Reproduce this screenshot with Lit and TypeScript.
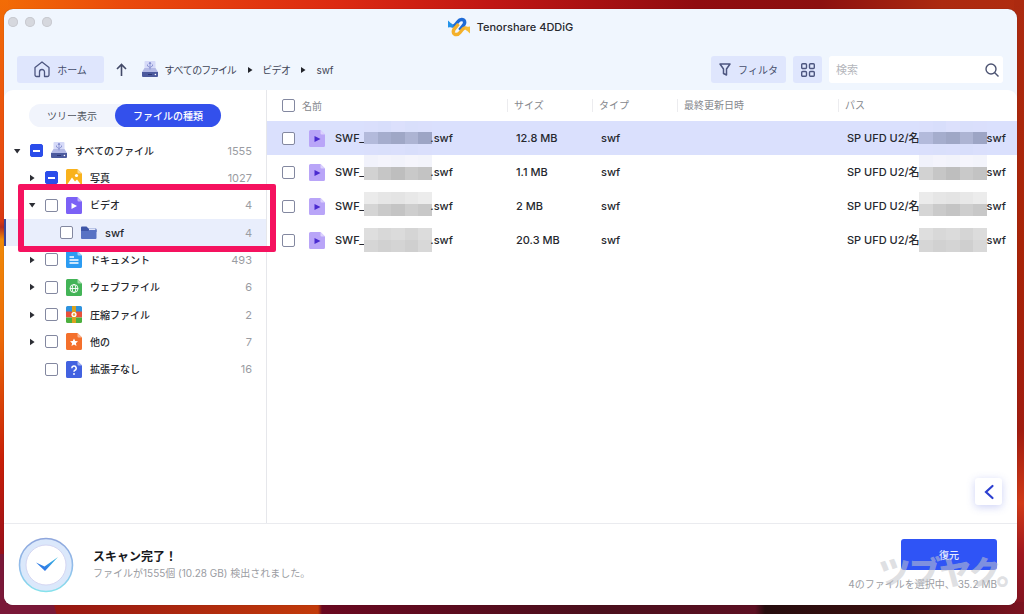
import { LitElement, html, svg, css } from "lit";
import { customElement, state } from "lit/decorators.js";
import { classMap } from "lit/directives/class-map.js";

type Kind = "drive" | "photo" | "video" | "folder" | "doc" | "web" | "zip" | "other" | "unknown";

interface Node {
  label: string;
  count: number;
  kind: Kind;
  level: number;
  arrow: "open" | "closed" | "none";
  partial?: boolean;
  selected?: boolean;
}

interface Band {
  y: number;
  h: number;
  shades: string[];
}

interface FileRow {
  size: string;
  selected?: boolean;
  mask: Band[];
}

const NODES: Node[] = [
  { label: "すべてのファイル", count: 1555, kind: "drive", level: 0, arrow: "open", partial: true },
  { label: "写真", count: 1027, kind: "photo", level: 1, arrow: "closed", partial: true },
  { label: "ビデオ", count: 4, kind: "video", level: 1, arrow: "open" },
  { label: "swf", count: 4, kind: "folder", level: 2, arrow: "none", selected: true },
  { label: "ドキュメント", count: 493, kind: "doc", level: 1, arrow: "closed" },
  { label: "ウェブファイル", count: 6, kind: "web", level: 1, arrow: "closed" },
  { label: "圧縮ファイル", count: 2, kind: "zip", level: 1, arrow: "closed" },
  { label: "他の", count: 7, kind: "other", level: 1, arrow: "closed" },
  { label: "拡張子なし", count: 16, kind: "unknown", level: 1, arrow: "none" },
];

const FILES: FileRow[] = [
  {
    size: "12.8 MB",
    selected: true,
    mask: [
      { y: 0, h: 11, shades: ["#dadffc", "#d8defb", "#dce0fc", "#d9dffb", "#dadffc"] },
      { y: 11, h: 12, shades: ["#b3badb", "#a5adcd", "#9fa7c6", "#adb4d3", "#9da5c5"] },
      { y: 23, h: 11, shades: ["#dadffc", "#d9dffb", "#dadffc", "#d8defb", "#dadffc"] },
    ],
  },
  {
    size: "1.1 MB",
    mask: [
      { y: 0, h: 12, shades: ["#f1f2fb", "#f4f4fc", "#f2f3fb", "#f5f5fc", "#f3f4fb"] },
      { y: 12, h: 13, shades: ["#d2d2d2", "#c6c6c6", "#bebebe", "#c9c9c9", "#c3c3c3"] },
    ],
  },
  {
    size: "2 MB",
    mask: [
      { y: 3, h: 12, shades: ["#ebebeb", "#e6e6e6", "#e4e4e4", "#e8e8e8", "#ececec"] },
      { y: 15, h: 12, shades: ["#d5d5d5", "#cacaca", "#c4c4c4", "#cecece", "#c8c8c8"] },
    ],
  },
  {
    size: "20.3 MB",
    mask: [
      { y: 5, h: 12, shades: ["#dedede", "#d8d8d8", "#dbdbdb", "#d5d5d5", "#dcdcdc"] },
      { y: 17, h: 12, shades: ["#d6d6d6", "#d1d1d1", "#d4d4d4", "#cfcfcf", "#d8d8d8"] },
    ],
  },
];

const sheet = (color: string, fold: string, mark: unknown) => svg`
  <path d="M1.5 0H11.5L16 4.5V15.5A1.5 1.5 0 0 1 14.5 17H1.5A1.5 1.5 0 0 1 0 15.5V1.5A1.5 1.5 0 0 1 1.5 0Z" fill=${color}/>
  <path d="M11.5 0L16 4.5H12.5A1 1 0 0 1 11.5 3.5Z" fill=${fold}/>${mark}`;

const GLYPHS: Record<Kind, unknown> = {
  drive: svg`
    <path d="M3.500 0H12.500A1 1 0 0 1 13.500 1V10H2.500V1A1 1 0 0 1 3.500 0Z" fill="#d6daf8"/>
    <path d="M2.500 7L0 11H16L13.500 7Z" fill="#b4bae6"/>
    <path d="M8 8.500V2M8 1L7 2.500H9ZM5.500 3.500V5L8 6.500L10.500 5V3.500" fill="none" stroke="#7d88cc" stroke-width=".8"/>
    <path d="M0 11H16V15A1 1 0 0 1 15 16H1A1 1 0 0 1 0 15Z" fill="#4c5a9e"/>
    <path d="M6 13.5H10" stroke="#2d3873" stroke-width="1"/><circle cx="13.4" cy="13.5" r=".8" fill="#fff"/>`,
  photo: sheet("#f9b21c", "#fcd88a", svg`<path d="M1.5 15L6 8.5L9 12.5L11 10.5L14.5 15Z" fill="#fff"/><circle cx="10.5" cy="6.5" r="1.6" fill="#fff"/>`),
  video: sheet("#7b61f6", "#bfb0fb", svg`<path d="M5.5 6L11 9L5.5 12Z" fill="#fff"/>`),
  folder: svg`<path d="M0 3.5A1 1 0 0 1 1 2.5H5.5L7.5 4.5H14.5A1 1 0 0 1 15.5 5.5V8H0Z" fill="#3f56a8"/><path d="M8 4.5H14.5V7H8Z" fill="#dfe5fa"/><path d="M0 7H7L8.5 6H15.5V14A1 1 0 0 1 14.5 15H1A1 1 0 0 1 0 14Z" fill="#5872c4"/>`,
  doc: sheet("#2c9cf2", "#9dd2fb", svg`<path d="M3.5 6H8M3.5 9H12.5M3.5 12H12.5" stroke="#fff" stroke-width="1.4"/>`),
  web: sheet("#43b457", "#a3dcab", svg`<g fill="none" stroke="#fff" stroke-width=".9"><circle cx="8" cy="9.5" r="4"/><ellipse cx="8" cy="9.5" rx="1.8" ry="4"/><path d="M4 9.5H12"/></g>`),
  zip: svg`<path d="M1.5 0H14.5A1.5 1.5 0 0 1 16 1.5V6H0V1.5A1.5 1.5 0 0 1 1.5 0Z" fill="#2f93dd"/><path d="M0 5.5H16V11.5H0Z" fill="#e8503a"/><path d="M0 11.5H16V15.5A1.5 1.5 0 0 1 14.5 17H1.5A1.5 1.5 0 0 1 0 15.5Z" fill="#4caf3e"/><path d="M6 0H10V17H6Z" fill="#d9a21f"/><circle cx="8" cy="8.5" r="2.6" fill="#fff"/><circle cx="8" cy="8.5" r="1.2" fill="#e8a03a"/>`,
  other: sheet("#f4702c", "#fab795", svg`<path d="M8 5.4L9.2 8L12 8.3L9.9 10.2L10.5 13L8 11.6L5.5 13L6.1 10.2L4 8.3L6.8 8Z" fill="#fff"/>`),
  unknown: sheet("#4262e0", "#a5b5f3", svg`<path d="M5.8 7.2A2.2 2.2 0 1 1 8.8 9.3Q8 9.7 8 10.8" fill="none" stroke="#fff" stroke-width="1.5"/><circle cx="8" cy="13" r=".95" fill="#fff"/>`),
};

const icon = (kind: Kind) => html`<svg class="icon" viewBox="0 0 16 17" aria-hidden="true">${GLYPHS[kind]}</svg>`;

const mosaic = (bands: Band[]) => html`<svg class="mosaic" viewBox="0 0 68 34" preserveAspectRatio="none" shape-rendering="crispEdges" aria-hidden="true">
  ${bands.map((b) => b.shades.map((c, i) => svg`<rect x=${i * 13.6} y=${b.y} width="13.8" height=${b.h} fill=${c}/>`))}
</svg>`;

@customElement("app-root")
export class AppRoot extends LitElement {
  @state() private view: "tree" | "kind" = "kind";

  static styles = css`
    :host {
      display: flex;
      box-sizing: border-box;
      min-height: 100vh;
      padding: 9px 7px 9px 4px;
      font: 11px/16px Inter, "Noto Sans CJK JP", sans-serif;
      color: #26282e;
      background:
        linear-gradient(75deg, #7a1838 0 54px, transparent 55px) 0 100% / 70px 60px no-repeat,
        linear-gradient(90deg, #8d0f14 0, #c23a0a 318px, #6a0820 322px, #4a0f1c 600px, #5c0f22 755px, #260c0e 765px, #3c100f 900px, #7c1220 100%) 0 100% / 100% 12px no-repeat,
        linear-gradient(180deg, #ac2a10 0, #a82408 40%, #a01c10 70%, #d03a18 82%, #a01820 90%, #7c1220 100%) 100% 0 / 10px 100% no-repeat,
        linear-gradient(180deg, #f26c06 0, #e84c10 25%, #d83812 36%, #b42c20 37%, #f08a08 39%, #ec6a08 55%, #c81e08 75%, #98101a 90%, #7a1838 100%) 0 0 / 8px 100% no-repeat,
        linear-gradient(90deg, #f26c06 0, #ea4a0c 12%, #dc2a12 33%, #c01614 48%, #900c10 68%, #8c1010 80%, #ac2a10 92%, #b02c10 100%);
    }
    button, input { font: inherit; color: inherit; margin: 0; }
    button { border: 0; padding: 0; cursor: pointer; }
    svg { display: block; flex: none; }
    .window {
      position: relative;
      flex: 1;
      min-width: 0;
      display: flex;
      flex-direction: column;
      border-radius: 9px;
      overflow: hidden;
      background: #f0f6fe;
      box-shadow: 0 0 1px #0006;
    }
    .titlebar { display: grid; grid-template-columns: 1fr auto 1fr; align-items: center; height: 35px; }
    .lights { display: flex; gap: 7px; padding: 0 0 10px 4px; }
    .light { width: 10px; height: 10px; border-radius: 50%; background: #d6d8de; box-shadow: inset 0 0 0 1px #c8cad0; }
    .brand { display: flex; align-items: center; gap: 7px; margin: 0; font-size: 11px; font-weight: 500; color: #26282e; }
    .logo { width: 22px; height: 20px; }
    .toolbar { display: flex; align-items: center; gap: 7px; padding: 12px 14px 7px 13px; }
    .tool {
      display: flex;
      align-items: center;
      justify-content: center;
      gap: 7px;
      height: 27px;
      border-radius: 3px;
      background: #dfe6fd;
      color: #464e6c;
      font-size: 10px;
    }
    .home { width: 87px; }
    .filter { width: 75px; }
    .grid { width: 29px; }
    .up { background: none; display: flex; padding: 0 5px; }
    .crumbs { display: flex; align-items: center; gap: 10px; flex: 1; padding-left: 3px; color: #3f4557; font-size: 10px; font-feature-settings: "palt"; }
    .crumbs a { display: flex; align-items: center; gap: 7px; color: inherit; text-decoration: none; }
    .icon { width: 16px; height: 17px; }
    .search { display: flex; align-items: center; width: 174px; height: 27px; box-sizing: border-box; padding: 0 4px 0 7px; border-radius: 3px; background: #fff; }
    .search input { flex: 1; min-width: 0; border: 0; padding: 0; outline: 0; background: none; font-size: 11px; }
    .search input::placeholder { color: #b4b6bc; opacity: 1; }
    .search button { background: none; }
    .main { flex: 1; display: flex; min-height: 0; background: #fff; border-radius: 9px 9px 0 0; }
    .side { width: 262px; flex: none; border-right: 1px solid #e6e7eb; }
    .tabs { display: flex; width: 192px; margin: 14px 0 10px 25px; border-radius: 12px; background: #f1f4fc; }
    .tab { height: 23px; flex: 1; border-radius: 12px; background: none; font-size: 10px; color: #50545f; }
    .tab.on { flex: none; width: 106px; background: #3350ec; color: #fff; font-weight: 500; }
    .tree { display: grid; grid-auto-rows: 1fr; height: 246px; margin: 0; padding: 0; list-style: none; }
    .node { display: flex; align-items: center; padding: 0 14px 0 9px; font-size: 10px; font-weight: 500; }
    .node.l1 { padding-left: 24px; }
    .node.l2 { padding-left: 39px; font-size: 11px; }
    .node.sel { background: #e9eefc; box-shadow: inset 2px 0 #3a479c; }
    .node label { display: flex; align-items: center; gap: 8px; flex: 1; }
    .twist { width: 9px; height: 8px; margin-right: 8px; background: none; }
    .count { color: #9a9ca2; font-size: 11px; font-weight: 400; }
    .box {
      appearance: none;
      box-sizing: border-box;
      flex: none;
      width: 13px;
      height: 13px;
      border: 1px solid #8388a0;
      border-radius: 2px;
      background: #fff;
    }
    .box:indeterminate { border-color: #2b4dea; background: linear-gradient(#fff, #fff) center / 7px 2px no-repeat #2b4dea; }
    .files { flex: 1; min-width: 0; position: relative; }
    table { width: 100%; table-layout: fixed; border-collapse: collapse; }
    th, td { padding: 0; text-align: left; white-space: nowrap; font-weight: 400; overflow: hidden; }
    th { height: 31px; color: #85878d; font-size: 10px; }
    th span { display: block; padding-left: 6px; line-height: 13px; border-left: 1px solid #ececef; }
    td { height: 34px; padding-left: 9px; font-weight: 500; color: #26282e; }
    tr.sel td { background: #dae0fd; }
    .c-pick { width: 42px; }
    .c-name { width: 198px; }
    .c-mid { width: 85px; }
    .c-path { width: 179px; }
    .pick { padding-left: 15px; }
    td .box { display: block; }
    td.name { padding-left: 0; }
    .cell { display: flex; align-items: center; }
    .all { gap: 7px; padding-left: 15px; }
    .name .icon { margin-right: 10px; }
    .mosaic { width: 68px; height: 34px; }
    .name .mosaic { margin-right: -2px; }
    .path .mosaic { margin-left: -1px; }
    .fold {
      position: absolute;
      right: 15px;
      bottom: 18px;
      width: 27px;
      height: 27px;
      display: grid;
      place-items: center;
      border-radius: 3px;
      background: #fff;
      box-shadow: 0 2px 8px #5a6be04d;
    }
    .foot { display: flex; align-items: center; gap: 19px; padding: 13px 20px 12px 14px; border-top: 1px solid #eaebef; background: #fff; }
    .badge { width: 56px; height: 56px; }
    .done { flex: 1; padding-bottom: 2px; }
    .done h2 { margin: 0; font-size: 12px; line-height: 18px; font-weight: 600; color: #18191d; }
    .done p, .sum { margin: 0; font-size: 10px; line-height: 14px; color: #9a9ca2; }
    .go { display: flex; flex-direction: column; align-items: flex-end; gap: 7px; }
    .restore { width: 96px; height: 31px; border-radius: 3px; background: #2f54f6; color: #e6ebff; font-size: 10px; font-weight: 500; }
    .mark {
      position: absolute;
      right: 5px;
      bottom: 15px;
      font: 900 32px/40px "Noto Sans CJK JP", sans-serif;
      font-feature-settings: "palt";
      color: #c4c6cc8c;
      pointer-events: none;
    }
    .callout { position: absolute; left: 14px; top: 175px; width: 246px; height: 56px; border: 6px solid #f5125f; border-radius: 2px; pointer-events: none; }
  `;

  private node(n: Node) {
    const id = `n-${n.kind}`;
    return html`<li class=${classMap({ node: true, l1: n.level === 1, l2: n.level === 2, sel: !!n.selected })}>
      ${n.arrow === "none"
        ? html`<span class="twist"></span>`
        : html`<button class="twist" aria-label=${n.label}>
            <svg width="8" height="8" viewBox="0 0 8 8"><path d=${n.arrow === "open" ? "M1 2H7.4L4.2 6.4Z" : "M2 .8L6.6 4L2 7.2Z"} fill="#2c2e35"/></svg>
          </button>`}
      <label for=${id}><input class="box" type="checkbox" id=${id} .indeterminate=${!!n.partial} />${icon(n.kind)}${n.label}</label>
      <span class="count">${n.count}</span>
    </li>`;
  }

  private row(f: FileRow, i: number) {
    return html`<tr class=${classMap({ sel: !!f.selected })}>
      <td class="pick"><input class="box" type="checkbox" aria-label="SWF_ ${i + 1}" /></td>
      <td class="name"><div class="cell">
        <svg class="icon" viewBox="0 0 16 17" aria-hidden="true">${sheet("#b9a5f8", "#dcd2fd", svg`<path d="M5.5 6L11.5 9L5.5 12Z" fill="#4a2bd0"/>`)}</svg>
        SWF_${mosaic(f.mask)}.swf
      </div></td>
      <td>${f.size}</td>
      <td>swf</td>
      <td></td>
      <td class="path"><div class="cell">SP UFD U2/名${mosaic(f.mask)}swf</div></td>
    </tr>`;
  }

  render() {
    const sep = html`<svg width="6" height="8" viewBox="0 0 6 8"><path d="M1 1L5.5 4L1 7Z" fill="#23252c"/></svg>`;
    return html`<div class="window">
      <header>
        <div class="titlebar">
          <div class="lights"><span class="light"></span><span class="light"></span><span class="light"></span></div>
          <h1 class="brand">
            <svg class="logo" viewBox="0 0 22 20" fill="none" stroke-width="3.400">
              <path d="M2 7.500C4 10 6 9.500 8 7L10 4.500C12 1.800 15.500 1.800 16.500 4.200C17.300 6.300 16 8 14.500 9.500L11.500 13" stroke="#1f6bd6"/>
              <path d="M0 3.500V10.500L6.500 9.500Z" fill="#2393ea"/>
              <path d="M20 12.500C18 10 16 10.500 14 13L12 15.500C10 18.200 6.500 18.200 5.500 15.800C4.700 13.700 6 12 7.500 10.500L10.500 7" stroke="#f4b02a"/>
              <path d="M22 16.500V9.500L15.500 10.500Z" fill="#f7bd35"/>
            </svg>
            Tenorshare 4DDiG
          </h1>
        </div>
        <nav class="toolbar">
          <button class="tool home">
            <svg width="16" height="17" viewBox="0 0 16 17" fill="none" stroke="#4d5680" stroke-width="1.3" stroke-linejoin="round" stroke-linecap="round"><path d="M5.500 15.500H2.500A1.500 1.500 0 0 1 1 14V6.500L8 1L15 6.500V14A1.500 1.500 0 0 1 13.500 15.500H10.500V11A2.500 2.500 0 0 0 5.500 11Z"/></svg>ホーム
          </button>
          <button class="up" aria-label="上へ"><svg width="11" height="14" viewBox="0 0 11 14" fill="none" stroke="#434a68" stroke-width="1.6"><path d="M5.500 13V1.500M1 6L5.500 1.500L10 6"/></svg></button>
          <div class="crumbs">
            <a href="#all">${icon("drive")}すべてのファイル</a>${sep}<a href="#video">ビデオ</a>${sep}<a href="#swf">swf</a>
          </div>
          <button class="tool filter"><svg width="12" height="13" viewBox="0 0 12 13" fill="none" stroke="#4d5680" stroke-width="1.500" stroke-linejoin="round"><path d="M1 1H11L7.500 6V12L4.500 10.500V6Z"/></svg>フィルタ</button>
          <button class="tool grid" aria-label="グリッド"><svg width="14" height="14" viewBox="0 0 14 14" fill="none" stroke="#4d5680" stroke-width="1.400"><rect x=".7" y=".7" width="4.800" height="4.800" rx="1"/><rect x="8.500" y=".7" width="4.800" height="4.800" rx="1"/><rect x=".7" y="8.500" width="4.800" height="4.800" rx="1"/><rect x="8.500" y="8.500" width="4.800" height="4.800" rx="1"/></svg></button>
          <div class="search">
            <input type="text" placeholder="検索" aria-label="検索" />
            <button aria-label="検索"><svg width="14" height="14" viewBox="0 0 14 14" fill="none" stroke="#4d5472" stroke-width="1.400"><circle cx="6" cy="6" r="5"/><path d="M9.500 9.500L13.500 13.500"/></svg></button>
          </div>
        </nav>
      </header>
      <div class="main">
        <aside class="side">
          <div class="tabs">
            <button class=${classMap({ tab: true, on: this.view === "tree" })} @click=${() => (this.view = "tree")}>ツリー表示</button>
            <button class=${classMap({ tab: true, on: this.view === "kind" })} @click=${() => (this.view = "kind")}>ファイルの種類</button>
          </div>
          <ul class="tree">${NODES.map((n) => this.node(n))}</ul>
        </aside>
        <section class="files">
          <table>
            <colgroup><col class="c-pick" /><col class="c-name" /><col class="c-mid" /><col class="c-mid" /><col /><col class="c-path" /></colgroup>
            <thead><tr>
              <th colspan="2"><div class="cell all"><input class="box" type="checkbox" id="all" /><label for="all">名前</label></div></th>
              <th><span>サイズ</span></th>
              <th><span>タイプ</span></th>
              <th><span>最終更新日時</span></th>
              <th><span>パス</span></th>
            </tr></thead>
            <tbody>${FILES.map((f, i) => this.row(f, i))}</tbody>
          </table>
          <button class="fold" aria-label="開く"><svg width="12" height="16" viewBox="0 0 12 16" fill="none" stroke="#2c3fd0" stroke-width="2.200" stroke-linecap="round"><path d="M9.500 2L3 8L9.500 14"/></svg></button>
        </section>
      </div>
      <footer class="foot">
        <svg class="badge" viewBox="0 0 56 56">
          <defs>
            <linearGradient id="ring" x1="0" y1="0" x2="0" y2="1"><stop offset="0" stop-color="#8fa6dc"/><stop offset=".6" stop-color="#92c0ec"/><stop offset="1" stop-color="#86e2ec"/></linearGradient>
            <linearGradient id="tick" x1="0" y1="1" x2="1" y2="0"><stop offset="0" stop-color="#2a62e8"/><stop offset="1" stop-color="#3cc0e0"/></linearGradient>
          </defs>
          <circle cx="28" cy="28" r="26.500" fill="#dbe8fb" stroke="url(#ring)" stroke-width="1.600"/>
          <circle cx="28" cy="28" r="20" fill="#fff" stroke="#d5d6f2"/>
          <path d="M18 25.500L26.500 29.500L40 20L27 34Z" fill="url(#tick)"/>
        </svg>
        <div class="done"><h2>スキャン完了！</h2><p>ファイルが1555個 (10.28 GB) 検出されました。</p></div>
        <div class="go"><button class="restore">復元</button><p class="sum">4のファイルを選択中、 35.2 MB</p></div>
      </footer>
      <div class="callout"></div>
      <div class="mark">ツブヤク。</div>
    </div>`;
  }
}
